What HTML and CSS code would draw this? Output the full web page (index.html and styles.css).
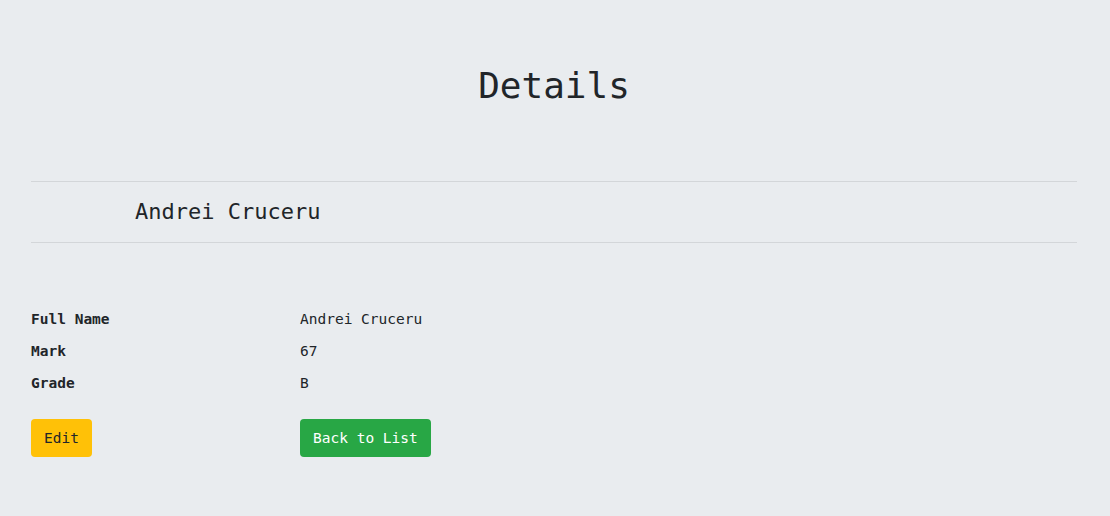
FILE: index.html
```html
<!DOCTYPE html>
<html>
<head>
<meta charset="utf-8">
<link rel="stylesheet" href="styles.css">
</head>
<body>
<main class="page">
  <h1 class="title">Details</h1>
  <hr class="rule">
  <h4 class="name">Andrei Cruceru</h4>
  <hr class="rule">
  <dl class="details">
    <dt>Full Name</dt>
    <dd>Andrei Cruceru</dd>
    <dt>Mark</dt>
    <dd>67</dd>
    <dt>Grade</dt>
    <dd>B</dd>
  </dl>
  <div class="actions">
    <a class="btn btn-warning" href="#">Edit</a>
    <a class="btn btn-success" href="#">Back to List</a>
  </div>
</main>
</body>
</html>
```

FILE: styles.css
```css
html, body {
  margin: 0;
  padding: 0;
  background: #e9ecef;
  color: #212529;
  font-family: "DejaVu Sans Mono", "Liberation Mono", monospace;
}

.page {
  padding: 64px 33px 0 31px;
}

.title {
  margin: 0 0 74px;
  text-align: center;
  font-weight: 400;
  font-size: 36px;
  line-height: 43px;
}

.rule {
  margin: 0;
  border: 0;
  border-top: 1px solid #d3d6d9;
  height: 0;
}

.name {
  margin: 0;
  padding-left: 104px;
  font-weight: 400;
  font-size: 22px;
  line-height: 60px;
}

.details {
  margin: 60px 0 0;
  display: grid;
  grid-template-columns: 269px 1fr;
  grid-auto-rows: 32px;
  font-size: 14.5px;
  align-items: center;
}

.details dt {
  font-weight: 700;
}

.details dd {
  margin: 0;
}

.actions {
  margin-top: 20px;
  display: grid;
  grid-template-columns: 269px 1fr;
  justify-items: start;
}

.btn {
  display: inline-block;
  height: 38px;
  line-height: 38px;
  padding: 0 13px;
  border-radius: 4px;
  font-size: 14.5px;
  text-decoration: none;
}

.btn-warning {
  background: #ffc107;
  color: #212529;
}

.btn-success {
  background: #28a745;
  color: #fff;
}
```
